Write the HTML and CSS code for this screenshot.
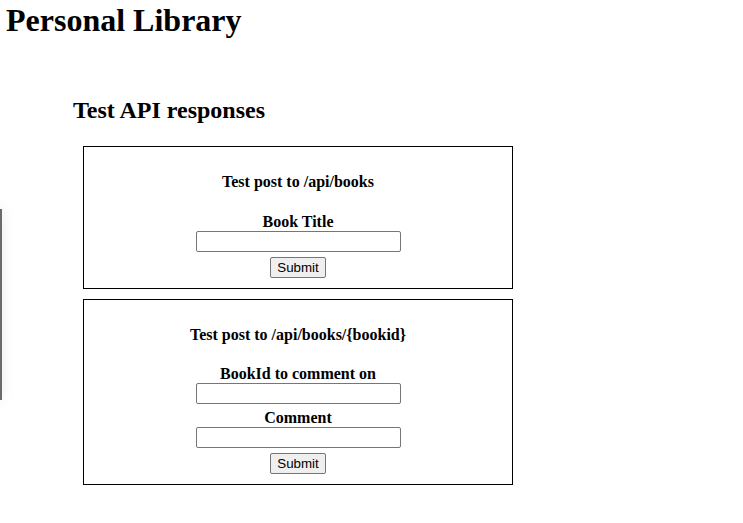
FILE: index.html
```html
<!DOCTYPE html>
<html lang="en">
<head>
<meta charset="utf-8">
<title>Personal Library</title>
<link rel="stylesheet" href="styles.css">
</head>
<body>
<div class="side-panel"></div>
<header class="page-header">
  <h1 class="title">Personal Library</h1>
</header>
<div class="sample">
  <h2 class="sample-title">Test API responses</h2>
  <form class="border" action="/api/books" method="post">
    <h4 class="form-title">Test post to /api/books</h4>
    <label class="field-label" for="title">Book Title</label><br>
    <input class="text-input" type="text" id="title" name="title" value=""><br>
    <input class="submit" type="submit" value="Submit">
  </form>
  <form class="border" action="" method="post">
    <h4 class="form-title">Test post to /api/books/{bookid}</h4>
    <label class="field-label" for="idinputtest">BookId to comment on</label><br>
    <input class="text-input" type="text" id="idinputtest" name="id" value=""><br>
    <label class="field-label" for="comment">Comment</label><br>
    <input class="text-input" type="text" id="comment" name="comment" value=""><br>
    <input class="submit" type="submit" value="Submit">
  </form>
</div>
</body>
</html>
```

FILE: styles.css
```css
html, body {
  margin: 0;
  padding: 0;
  background: #ffffff;
}

body {
  font-family: "Liberation Serif", "Times New Roman", serif;
  color: #000000;
}

.side-panel {
  position: fixed;
  top: 209px;
  left: -200px;
  width: 200px;
  height: 191px;
  border-right: 2px solid #6b6b6b;
  background: #ffffff;
  box-shadow: 0 0 14px rgba(0, 0, 0, 0.08);
}

.page-header {
  padding: 2px 0 0 6px;
}

.title {
  margin: 0;
  font-size: 32px;
  font-weight: bold;
}

.sample {
  width: 450px;
  margin: 58px 0 0 73px;
  text-align: center;
}

.sample-title {
  text-align: left;
  margin: 0 0 22px 0;
  font-size: 24px;
  font-weight: bold;
}

.border {
  border: 1px solid #000000;
  margin: 10px;
  padding: 5px 0 10px;
}

.form-title {
  margin: 21.28px 0;
  font-size: 16px;
  font-weight: bold;
}

.field-label {
  font-weight: bold;
  font-size: 16px;
}

.text-input {
  box-sizing: border-box;
  width: 205px;
  height: 21px;
  margin: 0 0 5px;
  padding: 1px 2px;
  border: 1px solid #767676;
  border-radius: 2px;
  font-family: "Liberation Sans", Arial, sans-serif;
  font-size: 13.33px;
  background: #ffffff;
}

.submit {
  margin: 0;
  height: 21px;
  padding: 1px 6px;
  border: 1px solid #767676;
  border-radius: 2px;
  background: #efefef;
  font-family: "Liberation Sans", Arial, sans-serif;
  font-size: 13.33px;
  color: #000000;
}
```
